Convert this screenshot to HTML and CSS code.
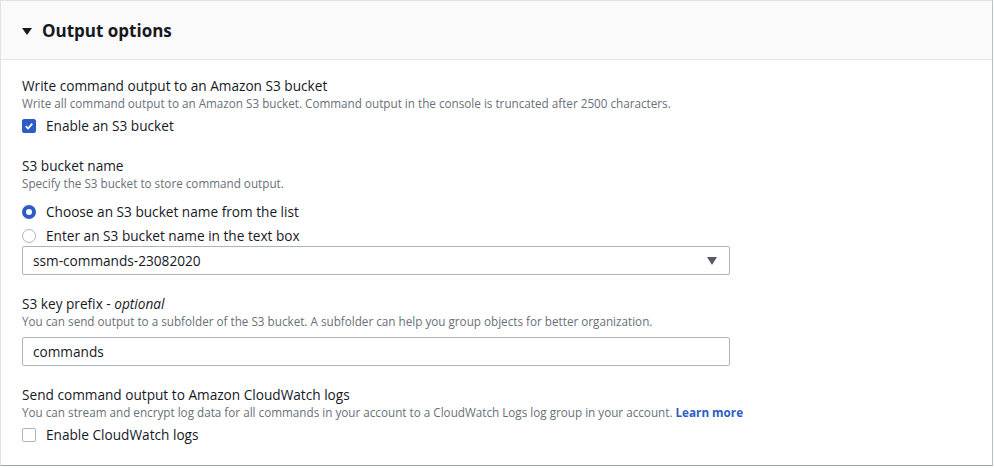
FILE: index.html
```html
<!DOCTYPE html>
<html>
<head>
<meta charset="utf-8">
<link rel="stylesheet" href="styles.css">
</head>
<body>
<div class="panel">
  <div class="header">
    <span class="caret"></span>
    <h2>Output options</h2>
  </div>
  <div class="content">
    <div class="field">
      <div class="label">Write command output to an Amazon S3 bucket</div>
      <div class="desc">Write all command output to an Amazon S3 bucket. Command output in the console is truncated after 2500 characters.</div>
      <label class="opt"><span class="cb checked"><svg viewBox="0 0 14 14" width="14" height="14"><path d="M3.2 7.2 L5.9 9.9 L10.8 4.2" fill="none" stroke="#fff" stroke-width="2"/></svg></span>Enable an S3 bucket</label>
    </div>
    <div class="field">
      <div class="label">S3 bucket name</div>
      <div class="desc">Specify the S3 bucket to store command output.</div>
      <div class="radios">
        <label class="ropt"><span class="radio checked"></span>Choose an S3 bucket name from the list</label>
        <label class="ropt"><span class="radio"></span>Enter an S3 bucket name in the text box</label>
      </div>
      <div class="select"><span>ssm-commands-23082020</span><span class="tri"></span></div>
    </div>
    <div class="field">
      <div class="label">S3 key prefix - <i>optional</i></div>
      <div class="desc">You can send output to a subfolder of the S3 bucket. A subfolder can help you group objects for better organization.</div>
      <div class="input">commands</div>
    </div>
    <div class="field">
      <div class="label">Send command output to Amazon CloudWatch logs</div>
      <div class="desc">You can stream and encrypt log data for all commands in your account to a CloudWatch Logs log group in your account. <a href="#">Learn more</a></div>
      <label class="opt"><span class="cb"></span>Enable CloudWatch logs</label>
    </div>
  </div>
</div>
</body>
</html>
```
FILE: styles.css
```css
* { box-sizing: border-box; }
html, body { margin: 0; padding: 0; background: #fff; }
body { font-family: "Open Sans", "Noto Sans", sans-serif; color: #16191f; width: 994px; height: 468px; overflow: hidden; }
.panel { width: 993px; height: 466px; border: 1px solid #dfe3e5; border-right-color: #b8c0c3; border-bottom-color: #9aa5a8; }
.header { height: 59px; background: #fafafa; border-bottom: 1px solid #e4e7e8; display: flex; align-items: center; padding-left: 21px; }
.caret { width: 0; height: 0; border-left: 5px solid transparent; border-right: 5px solid transparent; border-top: 7px solid #16191f; margin-right: 10px; margin-top: 2px; }
h2 { margin: 0; font-size: 17px; font-weight: 700; line-height: 22px; margin-top: 2px; }
.content { padding: 17px 20px 0 21px; }
.field { margin-bottom: 20px; }
.label { font-size: 13.65px; line-height: 18px; }
.label i { font-style: italic; }
.desc { font-size: 11.7px; line-height: 16px; color: #687078; }
.desc a { color: #2d5dc4; font-weight: 700; text-decoration: none; }
.opt { display: flex; align-items: center; font-size: 13.65px; line-height: 18px; height: 22px; margin-top: 4px; }
.radios { margin-top: 11px; display: flex; flex-direction: column; gap: 4px; }
.ropt { display: flex; align-items: center; font-size: 13.65px; line-height: 18px; height: 20px; }
.cb { width: 14px; height: 14px; border: 1px solid #aab7b8; border-radius: 2px; margin-right: 10px; display: inline-flex; align-items: center; justify-content: center; flex: none; }
.cb.checked { background: #2d5dc4; border-color: #2d5dc4; }
.cb svg { display: block; }
.radio { width: 14px; height: 14px; border: 1px solid #aab7b8; border-radius: 50%; margin-right: 10px; flex: none; }
.radio.checked { border: 4px solid #2d5dc4; }
.select, .input { width: 708px; height: 29px; border: 1px solid #aab7b8; border-radius: 2px; display: flex; align-items: center; justify-content: space-between; padding: 0 12px 0 10px; font-size: 13.65px; }
.input { margin-top: 8px; }
.tri { width: 0; height: 0; border-left: 5px solid transparent; border-right: 5px solid transparent; border-top: 8px solid #545b64; }
```
